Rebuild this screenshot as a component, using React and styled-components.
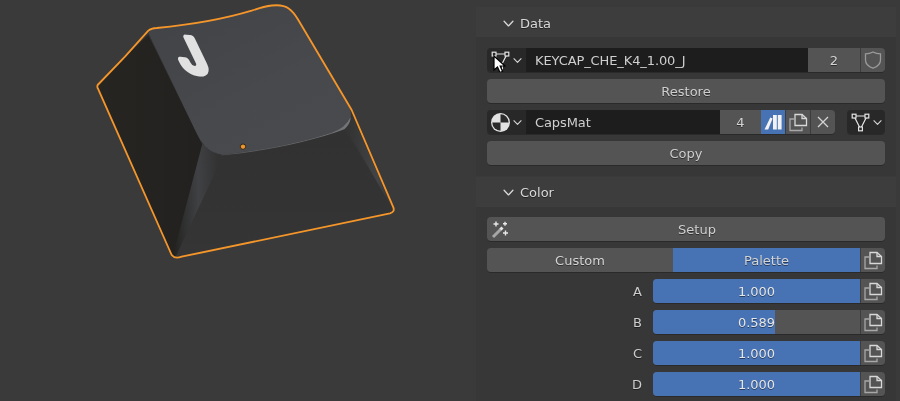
import styled, { createGlobalStyle } from "styled-components";

const GlobalStyle = createGlobalStyle`
  html, body {
    margin: 0;
    padding: 0;
    background: #3a3a3a;
  }
  body {
    width: 900px;
    height: 401px;
    overflow: hidden;
  }
`;

const Editor = styled.div`
  display: flex;
  width: 900px;
  height: 401px;
  overflow: hidden;
  background: #3a3a3a;
  font-family: "DejaVu Sans", sans-serif;
  font-size: 13px;
  color: #dcdcdc;
  filter: blur(0.3px);
`;

const Viewport = styled.div`
  width: 476px;
  flex: none;
  padding-left: 85px;
  box-sizing: border-box;
`;

const KeycapDrawing = styled.svg`
  display: block;
  width: 320px;
  height: 265px;
`;

const Sidebar = styled.div`
  width: 420px;
  flex: none;
  padding-top: 7px;
  display: flex;
  flex-direction: column;
  gap: 1px;
`;

const Panel = styled.section`
  background: #373737;
  border-radius: 4px 4px 0 0;
`;

const PanelHeader = styled.div`
  height: 30px;
  box-sizing: border-box;
  padding: ${(p) => p.$nudge || 0}px 0 0 27px;
  display: flex;
  align-items: center;
  gap: 6px;
  background: #3d3d3d;
  color: #d8d8d8;
  text-shadow: 0 1px 0 rgba(0, 0, 0, 0.45);
`;

const PanelBody = styled.div`
  display: flex;
  flex-direction: column;
  gap: 7px;
  padding: ${(p) => p.$top}px 11px 11px;
`;

const Row = styled.div`
  display: flex;
  height: 24px;
  gap: ${(p) => p.$gap || 0}px;
`;

const Group = styled.div`
  display: flex;
  height: 24px;
  flex: ${(p) => (p.$width ? "none" : "1 0 auto")};
  width: ${(p) => (p.$width ? `${p.$width}px` : "auto")};
  border-radius: 4px;
  overflow: hidden;
  box-shadow: 0 1px 0 rgba(0, 0, 0, 0.22);
`;

const Segment = styled.div`
  position: relative;
  display: flex;
  align-items: center;
  justify-content: center;
  box-sizing: border-box;
  flex: ${(p) => (p.$width ? "none" : 1)};
  width: ${(p) => (p.$width ? `${p.$width}px` : "auto")};
  background: ${(p) => p.$bg || "#545454"};
  border-left: ${(p) => (p.$divide ? "1px solid #3c3c3c" : "none")};
  color: #d4d4d4;
  text-shadow: 0 1px 0 rgba(0, 0, 0, 0.45);
`;

const TextField = styled(Segment)`
  justify-content: flex-start;
  padding-left: 9px;
  background: #1d1d1d;
  color: #cfcfcf;
  letter-spacing: -0.1px;
  text-shadow: none;
`;

const Dropdown = styled(Segment)`
  justify-content: flex-start;
  gap: 2px;
  padding-left: 3px;
  background: #282828;
`;

const Button = styled.div`
  position: relative;
  height: 24px;
  box-sizing: border-box;
  padding-left: ${(p) => (p.$withIcon ? 22 : 0)}px;
  display: flex;
  align-items: center;
  justify-content: center;
  flex: 1;
  border-radius: 4px;
  background: #545454;
  color: #cfcfcf;
  box-shadow: 0 1px 0 rgba(0, 0, 0, 0.22);
  text-shadow: 0 1px 0 rgba(0, 0, 0, 0.45);
`;

const ButtonIcon = styled.span`
  position: absolute;
  left: 4px;
  top: 3px;
  display: flex;
`;

const PropRow = styled.div`
  display: grid;
  grid-template-columns: 155px 1fr;
  column-gap: 11px;
  align-items: center;
  height: 24px;
`;

const PropLabel = styled.div`
  text-align: right;
  color: #cdcdcd;
  text-shadow: 0 1px 0 rgba(0, 0, 0, 0.45);
`;

const SliderTrack = styled.div`
  position: relative;
  flex: 1;
  display: flex;
  align-items: center;
  justify-content: center;
  background: #545454;
`;

const SliderFill = styled.div`
  position: absolute;
  left: 0;
  top: 0;
  bottom: 0;
  background: #4772b3;
`;

const SliderValue = styled.span`
  position: relative;
  color: #e6e6e6;
  text-shadow: 0 1px 0 rgba(0, 0, 0, 0.45);
`;

const CursorMark = styled.svg`
  position: absolute;
  left: 6px;
  top: 7px;
  width: 13px;
  height: 19px;
  z-index: 2;
`;

function Chevron({ size = 9, color = "#d8d8d8" }) {
  return (
    <svg width={size} height={size} viewBox="0 0 10 10" fill="none" stroke={color} strokeWidth="1.2">
      <path d="M1 3 L5 7.2 L9 3" strokeLinecap="round" strokeLinejoin="round" />
    </svg>
  );
}

function MeshIcon() {
  return (
    <svg width="21" height="21" viewBox="0 0 21 21" fill="none" stroke="#e4e4e4" strokeWidth="1.2">
      <path d="M4 4 H17 L10.5 17 Z" />
      <rect x="2.2" y="2.2" width="3.8" height="3.8" fill="#282828" />
      <rect x="15" y="2.2" width="3.8" height="3.8" fill="#282828" />
      <rect x="8.6" y="15" width="3.8" height="3.8" fill="#282828" />
    </svg>
  );
}

function MaterialIcon() {
  return (
    <svg width="21" height="21" viewBox="0 0 20 20">
      <circle cx="10" cy="10" r="9" fill="#e2e2e2" />
      <path d="M10 2.2 A7.8 7.8 0 0 1 17.8 10 H10 Z" fill="#2a2a2a" />
      <path d="M10 10 V17.8 A7.8 7.8 0 0 1 2.2 10 Z" fill="#2a2a2a" />
    </svg>
  );
}

function ShieldIcon() {
  return (
    <svg width="18" height="20" viewBox="0 0 18 20" fill="none" stroke="#9a9a9a" strokeWidth="1.3">
      <path d="M9 2 C6.5 3.4 4 3.8 1.5 3.8 V10 C1.5 14 5 16.8 9 18.2 C13 16.8 16.5 14 16.5 10 V3.8 C14 3.8 11.5 3.4 9 2 Z" />
    </svg>
  );
}

function CopyIcon() {
  return (
    <svg width="20" height="20" viewBox="0 0 20 20" fill="none" stroke="#d8d8d8" strokeWidth="1.3">
      <path d="M7 2.5 H14 L18.5 6.5 V13.5 H7 Z" />
      <path d="M14 2.5 V6.5 H18.5" />
      <path d="M7 7 H2 V18.5 H14 V15.5" stroke="#a8a8a8" />
    </svg>
  );
}

function LibraryIcon() {
  return (
    <svg width="20" height="20" viewBox="0 0 20 20" fill="#f2f2f2">
      <path d="M1.5 17.5 L7.3 5.5 L9.6 6.6 L5.2 17.5 Z" />
      <rect x="10" y="3" width="3.8" height="14.5" />
      <rect x="14.8" y="3" width="3.8" height="14.5" />
    </svg>
  );
}

function CloseIcon() {
  return (
    <svg width="14" height="14" viewBox="0 0 14 14" fill="none" stroke="#d4d4d4" strokeWidth="1.3">
      <path d="M2 2 L12 12 M12 2 L2 12" />
    </svg>
  );
}

function WandIcon() {
  return (
    <svg width="20" height="19" viewBox="0 0 20 19" fill="none">
      <path d="M2 17 L10 9" stroke="#a6a6a6" strokeWidth="3" />
      <path d="M9.5 9.5 L11.5 7.5" stroke="#e8e8e8" strokeWidth="3" />
      <path d="M5 1.5 V6.5 M2.5 4 H7.5 M14 1.8 V5.8 M12 3.8 H16 M14.5 10.5 V15.5 M12 13 H17" stroke="#e8e8e8" strokeWidth="1.4" />
    </svg>
  );
}

function Keycap() {
  const outline =
    "M38 255 L120 170 L190 92 Q198 85 215 84 C300 76 400 62 500 32 C540 18 585 6 612 26 Q626 36 640 60 L800 330 L925 622 Q930 636 915 640 L290 770 Q270 778 260 765 L40 268 Q35 260 38 255 Z";
  return (
    <KeycapDrawing viewBox="0 0 960 795">
      <defs>
        <linearGradient id="top" x1="0.1" y1="0" x2="0.8" y2="1">
          <stop offset="0" stopColor="#424347" />
          <stop offset="0.6" stopColor="#47494d" />
          <stop offset="1" stopColor="#484a4e" />
        </linearGradient>
        <linearGradient id="left" x1="0" y1="0" x2="1" y2="0">
          <stop offset="0" stopColor="#262522" />
          <stop offset="1" stopColor="#22211f" />
        </linearGradient>
        <linearGradient id="front" x1="0" y1="0" x2="0" y2="1">
          <stop offset="0" stopColor="#313131" />
          <stop offset="1" stopColor="#353535" />
        </linearGradient>
        <linearGradient id="cornerA" x1="0.9" y1="0.2" x2="0" y2="0.25">
          <stop offset="0" stopColor="#323232" />
          <stop offset="0.45" stopColor="#404144" />
          <stop offset="1" stopColor="#242422" />
        </linearGradient>
        <linearGradient id="cornerB" x1="0" y1="0.2" x2="1" y2="0.3">
          <stop offset="0" stopColor="#323232" />
          <stop offset="0.7" stopColor="#434446" />
          <stop offset="1" stopColor="#363638" />
        </linearGradient>
        <linearGradient id="lip" x1="0" y1="1" x2="1" y2="0">
          <stop offset="0" stopColor="#55565a" />
          <stop offset="0.6" stopColor="#6b6c6e" />
          <stop offset="1" stopColor="#77787a" />
        </linearGradient>
      </defs>
      <path d={outline} fill="#333333" />
      <path d="M190 105 L355 440 L268 768 Q262 768 260 765 L40 268 Q35 260 38 255 L120 170 Z" fill="url(#left)" />
      <path d="M415 465 L780 392 L922 632 L915 640 L290 770 L272 770 Z" fill="url(#front)" />
      <path d="M352 432 L415 466 L272 770 L264 766 Z" fill="url(#cornerA)" />
      <path d="M782 385 L802 345 L925 630 Z" fill="url(#cornerB)" />
      <path
        d="M190 98 Q198 86 215 84 C300 76 400 62 500 32 C540 18 585 6 612 26 Q626 36 640 60 L790 318 Q806 345 790 372 Q780 386 740 398 C640 430 520 452 412 464 Q385 462 360 438 Q345 422 335 400 Z"
        fill="url(#top)"
      />
      <path
        d="M408 465 C520 452 640 430 740 398 Q780 386 797 352 Q796 372 778 388 C680 424 540 454 412 466 Z"
        fill="url(#lip)"
      />
      <text
        x="0"
        y="0"
        transform="matrix(1 0.06 0.48 1 300 216)"
        fontFamily="Inter, sans-serif"
        fontWeight="400"
        fontSize="145"
        fill="#e1e1e1"
        stroke="#e1e1e1"
        strokeWidth="20"
        strokeLinejoin="round"
      >
        J
      </text>
      <path d={outline} fill="none" stroke="#f5962b" strokeWidth="5.5" strokeLinejoin="round" />
      <circle cx="474" cy="440" r="8" fill="#f0952a" stroke="#1c1c1c" strokeWidth="2.5" />
    </KeycapDrawing>
  );
}

function CopyCell() {
  return (
    <Segment $width={25} $divide>
      <CopyIcon />
    </Segment>
  );
}

function SliderRow({ label, value, fill }) {
  return (
    <PropRow>
      <PropLabel>{label}</PropLabel>
      <Group>
        <SliderTrack>
          <SliderFill style={{ width: `${fill}%` }} />
          <SliderValue>{value}</SliderValue>
        </SliderTrack>
        <CopyCell />
      </Group>
    </PropRow>
  );
}

export default function App() {
  return (
    <>
      <GlobalStyle />
      <Editor>
        <Viewport>
          <Keycap />
        </Viewport>
        <Sidebar>
          <Panel>
            <PanelHeader $nudge={2}>
              <Chevron size={11} />
              Data
            </PanelHeader>
            <PanelBody $top={11}>
              <Group>
                <Dropdown $width={39}>
                  <MeshIcon />
                  <Chevron />
                  <CursorMark viewBox="0 0 13 19">
                    <path d="M1 1 V15 L4.5 12 L7 17.5 L9.5 16.3 L7.2 11 L12 11 Z" fill="#ffffff" stroke="#000000" strokeWidth="1.2" />
                  </CursorMark>
                </Dropdown>
                <TextField>KEYCAP_CHE_K4_1.00_J</TextField>
                <Segment $width={52}>2</Segment>
                <Segment $width={25} $divide>
                  <ShieldIcon />
                </Segment>
              </Group>
              <Row>
                <Button>Restore</Button>
              </Row>
              <Row $gap={12}>
                <Group>
                  <Dropdown $width={39}>
                    <MaterialIcon />
                    <Chevron />
                  </Dropdown>
                  <TextField>CapsMat</TextField>
                  <Segment $width={41}>4</Segment>
                  <Segment $width={24} $bg="#4772b3">
                    <LibraryIcon />
                  </Segment>
                  <CopyCell />
                  <Segment $width={25} $divide>
                    <CloseIcon />
                  </Segment>
                </Group>
                <Group $width={38}>
                  <Dropdown $width={38}>
                    <MeshIcon />
                    <Chevron />
                  </Dropdown>
                </Group>
              </Row>
              <Row>
                <Button>Copy</Button>
              </Row>
            </PanelBody>
          </Panel>
          <Panel>
            <PanelHeader>
              <Chevron size={11} />
              Color
            </PanelHeader>
            <PanelBody $top={10}>
              <Row>
                <Button $withIcon>
                  <ButtonIcon>
                    <WandIcon />
                  </ButtonIcon>
                  Setup
                </Button>
              </Row>
              <Group>
                <Segment $width={186}>Custom</Segment>
                <Segment $bg="#4772b3">Palette</Segment>
                <CopyCell />
              </Group>
              <SliderRow label="A" value="1.000" fill={100} />
              <SliderRow label="B" value="0.589" fill={58.9} />
              <SliderRow label="C" value="1.000" fill={100} />
              <SliderRow label="D" value="1.000" fill={100} />
            </PanelBody>
          </Panel>
        </Sidebar>
      </Editor>
    </>
  );
}
